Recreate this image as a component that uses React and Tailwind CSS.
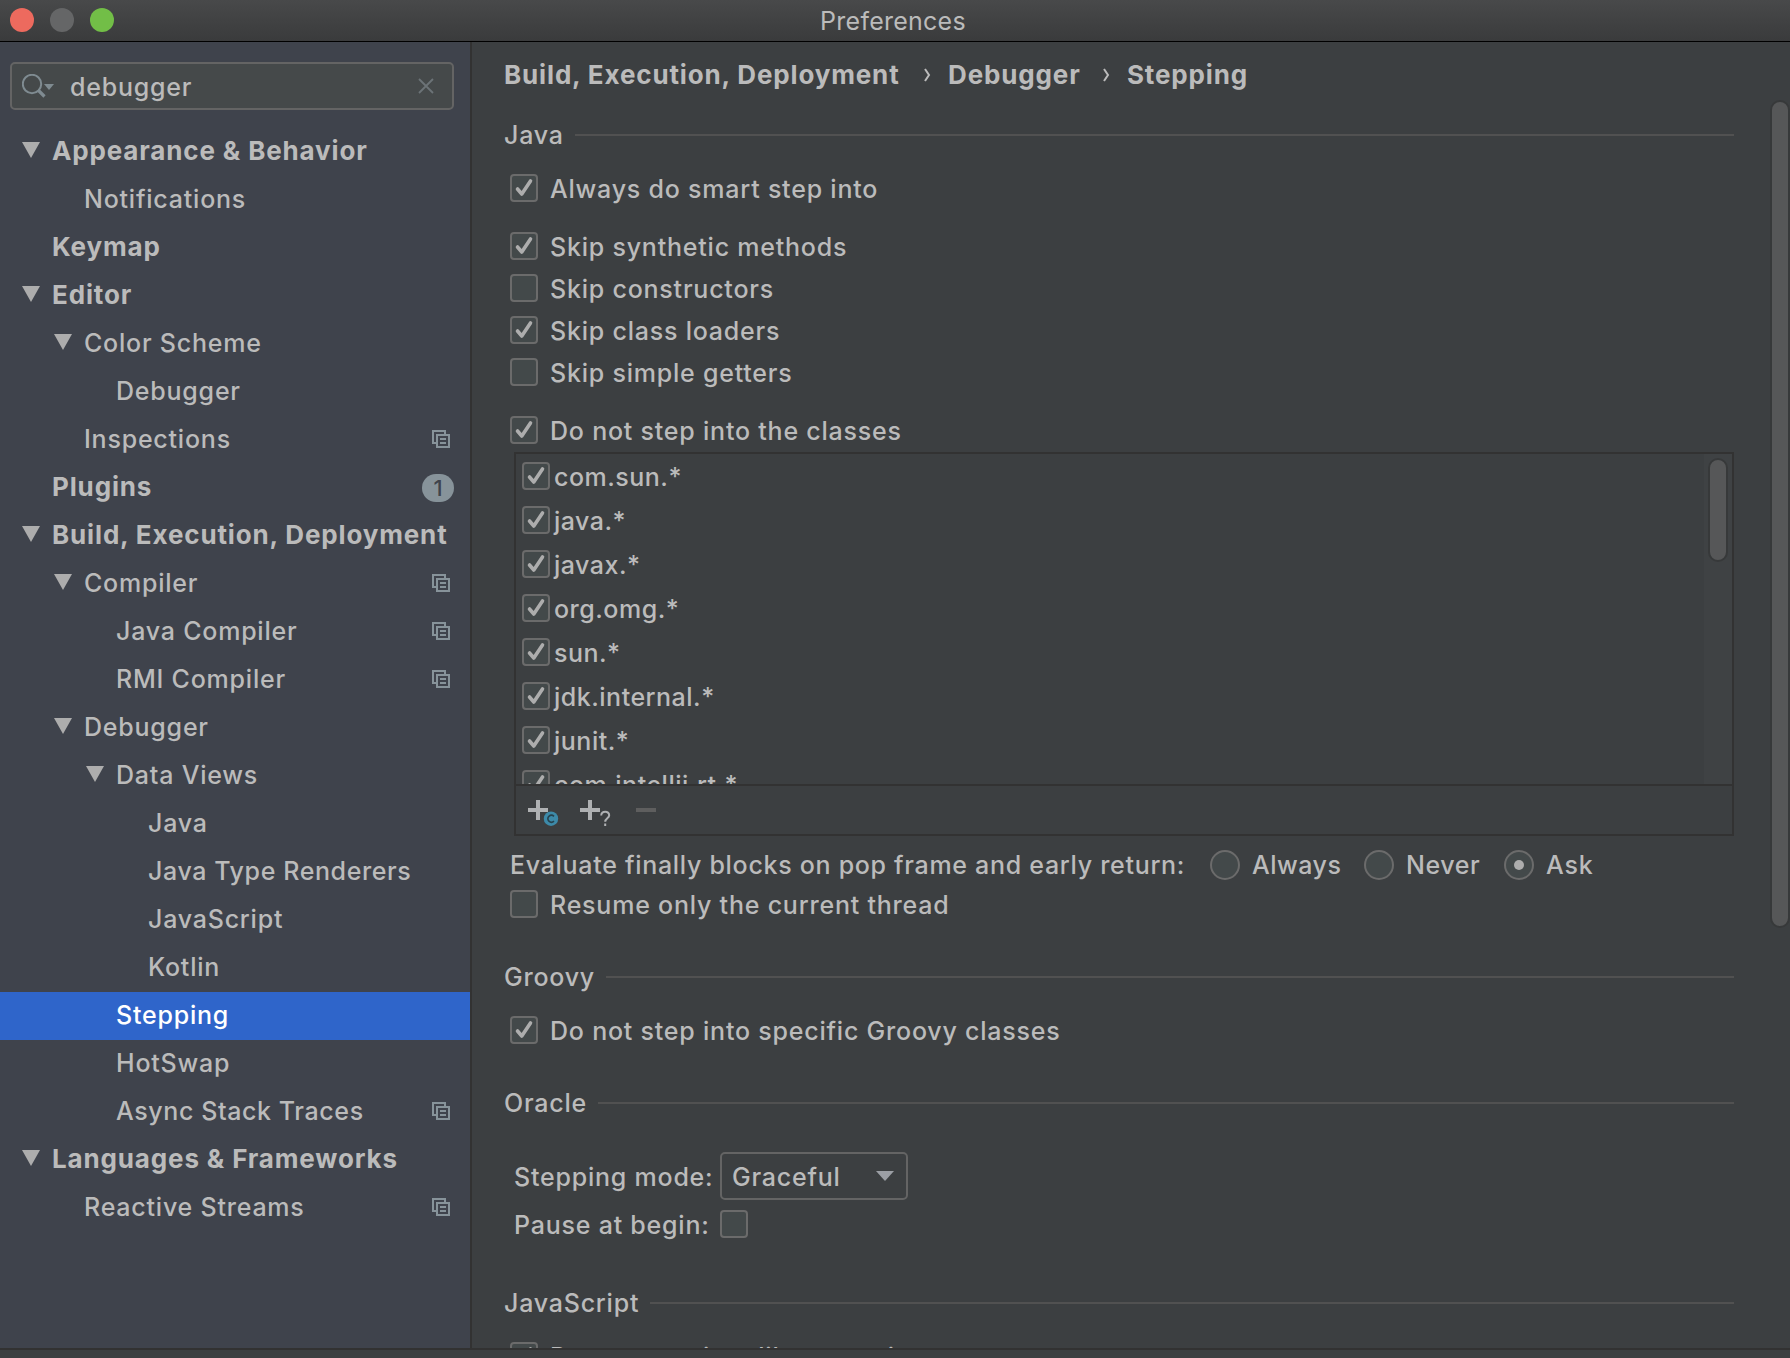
const tree = [
  { label: "Appearance & Behavior", level: 0, open: true, bold: true },
  { label: "Notifications", level: 1 },
  { label: "Keymap", level: 0, bold: true },
  { label: "Editor", level: 0, open: true, bold: true },
  { label: "Color Scheme", level: 1, open: true },
  { label: "Debugger", level: 2 },
  { label: "Inspections", level: 1, project: true },
  { label: "Plugins", level: 0, bold: true, badge: "1" },
  { label: "Build, Execution, Deployment", level: 0, open: true, bold: true },
  { label: "Compiler", level: 1, open: true, project: true },
  { label: "Java Compiler", level: 2, project: true },
  { label: "RMI Compiler", level: 2, project: true },
  { label: "Debugger", level: 1, open: true },
  { label: "Data Views", level: 2, open: true },
  { label: "Java", level: 3 },
  { label: "Java Type Renderers", level: 3, tight: true },
  { label: "JavaScript", level: 3 },
  { label: "Kotlin", level: 3 },
  { label: "Stepping", level: 2, selected: true },
  { label: "HotSwap", level: 2 },
  { label: "Async Stack Traces", level: 2, project: true, tight: true },
  { label: "Languages & Frameworks", level: 0, open: true, bold: true },
  { label: "Reactive Streams", level: 1, project: true },
];

const indents = ["pl-[22px]", "pl-[54px]", "pl-[86px]", "pl-[118px]"];

const patterns = ["com.sun.*", "java.*", "javax.*", "org.omg.*", "sun.*", "jdk.internal.*", "junit.*", "com.intellij.rt.*"];

function ProjectIcon() {
  return (
    <svg className="mr-[20px] size-[18px] shrink-0" viewBox="0 0 18 18" fill="none" stroke="#87939a" strokeWidth="2">
      <path d="M4 13H1V1h12v3" />
      <path d="M5 5h12v12H5z" />
      <path d="M8 9h6M8 13h6" />
    </svg>
  );
}

function TreeRow({ item }) {
  return (
    <div className={`flex h-12 items-center pb-[2px] ${indents[item.level]} ${item.selected ? "bg-[#2f65ca] text-white" : ""}`}>
      <span className="mr-3 mb-[2px] h-4 w-[18px] shrink-0">
        {item.open && (
          <svg className="block h-4 w-[18px]" viewBox="0 0 18 16" fill="#adadad">
            <path d="M0 0h18L9 16z" />
          </svg>
        )}
      </span>
      <span className={`flex-1 whitespace-nowrap ${item.bold ? "text-[26px] font-bold tracking-[0.85px]" : ""} ${item.tight ? "tracking-[0.6px]" : ""}`}>{item.label}</span>
      {item.project && <ProjectIcon />}
      {item.badge && (
        <span className="mt-[2px] mr-4 flex h-7 w-8 items-center justify-center rounded-full bg-[#87939a] text-[22px] tracking-normal text-[#3f434c]">
          {item.badge}
        </span>
      )}
    </div>
  );
}

function Box({ checked }) {
  return (
    <svg className="size-7 shrink-0" viewBox="0 0 28 28" fill="none">
      <rect x="1" y="1" width="26" height="26" rx="3" fill="#43494a" stroke="#6b6b6b" strokeWidth="2" />
      {checked && <path d="M7.500 15l4.300 5L20.500 7" stroke="#adadad" strokeWidth="3.600" strokeLinecap="round" strokeLinejoin="round" />}
    </svg>
  );
}

function Check({ checked, children }) {
  return (
    <div className="flex h-[42px] items-center gap-3 pl-[6px]">
      <Box checked={checked} />
      <span className="whitespace-nowrap pt-[2px]">{children}</span>
    </div>
  );
}

function Radio({ checked, children }) {
  return (
    <span className="flex items-center gap-3">
      <span className="flex size-[30px] items-center justify-center rounded-full border-2 border-[#6b6b6b] bg-[#43494a]">
        {checked && <span className="size-[10px] rounded-full bg-[#adadad]" />}
      </span>
      {children}
    </span>
  );
}

function Section({ title }) {
  return (
    <div className="flex h-8 items-center gap-[11px] pr-14">
      <span>{title}</span>
      <span className="h-[2px] flex-1 bg-[#515151]" />
    </div>
  );
}

function Sidebar() {
  return (
    <aside className="flex w-[472px] shrink-0 flex-col border-r-2 border-[#323232] bg-[#3f434c] pt-5">
      <div className="mx-[10px] mr-4 mb-[18px] flex h-12 shrink-0 items-center rounded-[5px] border-2 border-[#646464] bg-[#45494a]">
        <svg className="ml-[10px] h-6 w-8 shrink-0" viewBox="0 0 32 24" fill="none" stroke="#7f8b91" strokeWidth="2">
          <circle cx="10" cy="10" r="9.200" />
          <path d="M16 16l6.500 6.500" strokeWidth="3.200" />
          <path d="M22 10h10l-5 6z" fill="#7f8b91" stroke="none" />
        </svg>
        <span className="ml-4 flex-1 pt-[2px]">debugger</span>
        <svg className="mr-[18px] size-4" viewBox="0 0 16 16" stroke="#6c7377" strokeWidth="1.800">
          <path d="M1 1l14 14M15 1L1 15" />
        </svg>
      </div>
      {tree.map((item, i) => (
        <TreeRow key={i} item={item} />
      ))}
    </aside>
  );
}

function ClassList() {
  return (
    <div className="mt-px ml-[10px] mr-14 h-[384px] border-2 border-[#323232]">
      <div className="flex h-[330px] overflow-hidden">
        <div className="flex-1 pl-[6px]">
          {patterns.map((p) => (
            <div key={p} className="flex h-11 items-center gap-1 tracking-[0.5px]">
              <Box checked />
              <span className="pt-[2px]">{p}</span>
            </div>
          ))}
        </div>
        <div className="w-7 bg-[#3f4244] pl-1 pt-1">
          <div className="h-[104px] w-5 rounded-full border-2 border-[#37393a] bg-[#565758]" />
        </div>
      </div>
      <div className="flex h-[50px] items-center border-t-2 border-[#323232] pl-3">
        <svg className="mt-1 h-8 w-[160px]" viewBox="0 0 160 32" fill="none">
          <path d="M0 14h20M10 4v20M52 14h20M62 4v20" stroke="#afb1b3" strokeWidth="4" />
          <path d="M108 14h20" stroke="#5e5e5e" strokeWidth="4" />
          <circle cx="23" cy="22.700" r="7.200" fill="#3d8aa9" />
          <path d="M26 20.300a3.600 3.400 0 1 0 0 4.800" stroke="#26424e" strokeWidth="1.600" />
          <path d="M73.200 19.500c.2-5 8-5 8-.2 0 3-4 3-4 6.500M77.200 27.500v2.500" stroke="#afb1b3" strokeWidth="2" />
        </svg>
      </div>
    </div>
  );
}

function Crumb() {
  return (
    <svg className="h-[14px] w-[7px]" viewBox="0 0 7 14" fill="none" stroke="#bbbbbb" strokeWidth="2">
      <path d="M1 1l4 6-4 6" />
    </svg>
  );
}

export default function App() {
  return (
    <div className="flex h-[1358px] w-[1790px] flex-col overflow-hidden bg-[#3c3f41] font-['Inter',sans-serif] text-[25px] leading-8 font-[450] tracking-[0.78px] text-[#bbbbbb]">
      <header className="grid h-[42px] shrink-0 grid-cols-[1fr_auto_1fr] items-center border-b border-black bg-linear-to-b from-[#48494a] to-[#3a3b3c]">
        <div className="flex gap-4 pl-[10px] pb-px">
          <span className="size-6 rounded-full bg-[#ed6a5e]" />
          <span className="size-6 rounded-full bg-[#656667]" />
          <span className="size-6 rounded-full bg-[#72be47]" />
        </div>
        <h1 className="pr-1 font-normal tracking-[0.25px]">Preferences</h1>
      </header>
      <div className="flex h-[1306px] shrink-0">
        <Sidebar />
        <main className="flex h-full min-w-0 flex-1 overflow-hidden">
          <div className="flex min-w-0 flex-1 flex-col pl-8 pt-[17px] *:shrink-0">
            <div className="mb-7 flex h-8 items-center text-[26px] font-bold tracking-[0.85px] whitespace-nowrap">
              <span className="w-[420px]">Build, Execution, Deployment</span>
              <Crumb />
              <span className="ml-[17px] w-[155px]">Debugger</span>
              <Crumb />
              <span className="ml-[17px]">Stepping</span>
            </div>
            <Section title="Java" />
            <div className="mt-4">
              <Check checked>Always do smart step into</Check>
            </div>
            <div className="mt-4">
              <Check checked>Skip synthetic methods</Check>
              <Check>Skip constructors</Check>
              <Check checked>Skip class loaders</Check>
              <Check>Skip simple getters</Check>
            </div>
            <div className="mt-4">
              <Check checked>Do not step into the classes</Check>
            </div>
            <ClassList />
            <div className="mt-[13px] mb-[2px] flex h-8 items-center pl-[6px]">
              <span className="w-[700px] tracking-[0.7px]">Evaluate finally blocks on pop frame and early return:</span>
              <span className="w-[154px] tracking-[0.5px]"><Radio>Always</Radio></span>
              <span className="w-[140px] tracking-[0.6px]"><Radio>Never</Radio></span>
              <Radio checked>Ask</Radio>
            </div>
            <Check>Resume only the current thread</Check>
            <div className="mt-9"><Section title="Groovy" /></div>
            <div className="mt-4">
              <Check checked>Do not step into specific Groovy classes</Check>
            </div>
            <div className="mt-9"><Section title="Oracle" /></div>
            <div className="mt-[33px] flex h-12 items-center pl-[10px]">
              <span className="w-[206px] pt-[2px]">Stepping mode:</span>
              <span className="flex h-12 w-[188px] items-center justify-between rounded-[5px] border-2 border-[#646464] pl-[10px] pr-3">
                <span className="pt-[2px]">Graceful</span>
                <svg className="h-[10px] w-[18px]" viewBox="0 0 18 10" fill="#9c9fa5"><path d="M0 0h18L9 10z" /></svg>
              </span>
            </div>
            <div className="flex h-12 items-center pl-[10px]">
              <span className="w-[206px] pt-[2px]">Pause at begin:</span>
              <Box />
            </div>
            <div className="mt-[39px]"><Section title="JavaScript" /></div>
            <div className="mt-4">
              <Check checked>Do not step into library scripts</Check>
            </div>
          </div>
        </main>
        <div className="-ml-5 pt-[58px]">
          <div className="h-[828px] w-5 rounded-full border-2 border-[#37393a] bg-[#565758]" />
        </div>
      </div>
      <footer className="flex-1 border-t-2 border-[#323232]" />
    </div>
  );
}
